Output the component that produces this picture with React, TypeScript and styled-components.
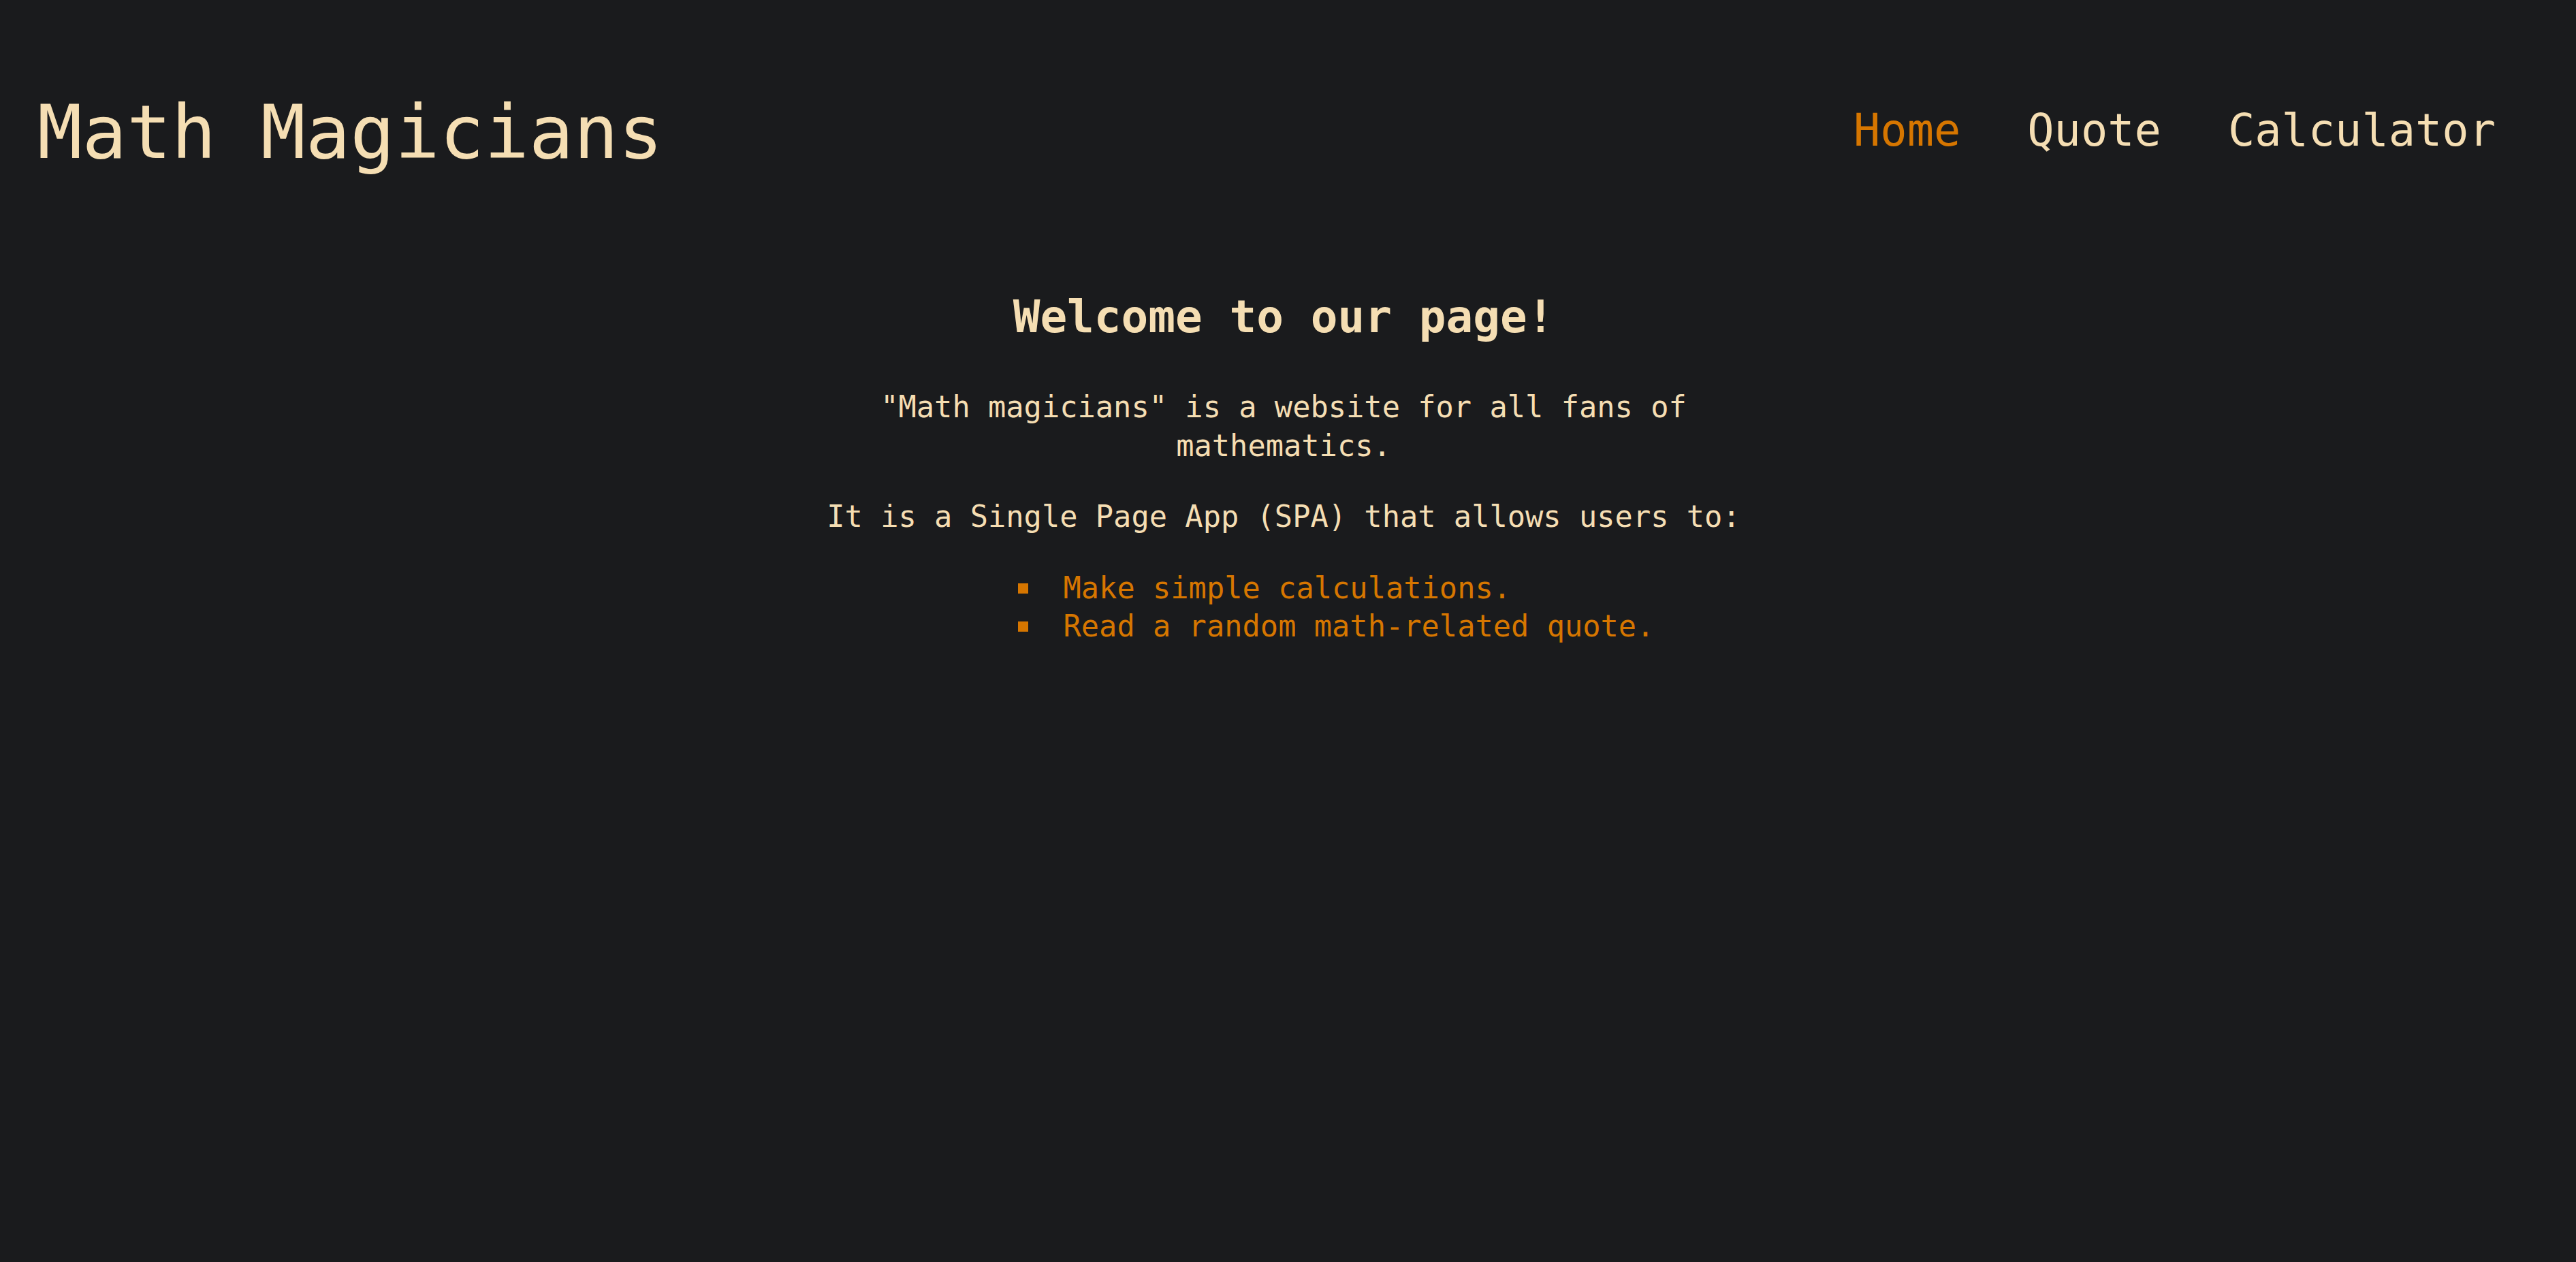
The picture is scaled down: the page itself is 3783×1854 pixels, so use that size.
import React from "react";
import styled, { createGlobalStyle } from "styled-components";

const GlobalStyle = createGlobalStyle`
  html, body {
    margin: 0;
    padding: 0;
    background: #1a1b1d;
  }
  body {
    min-height: 100vh;
    font-family: "DejaVu Sans Mono", "Liberation Mono", monospace;
    color: #f5deb3;
  }
`;

const Page = styled.div`
  min-height: 1854px;
  background: #1a1b1d;
  display: flex;
  flex-direction: column;
`;

const Header = styled.header`
  display: flex;
  align-items: center;
  justify-content: space-between;
  padding: 131px 118px 0 55px;
`;

const Logo = styled.h1`
  margin: 0;
  font-size: 109px;
  line-height: 127px;
  font-weight: normal;
  color: #f5deb3;
`;

const Nav = styled.nav`
  display: flex;
  gap: 98px;
  margin-bottom: 8px;
`;

const NavLink = styled.a<{ $active?: boolean }>`
  font-size: 65.3px;
  line-height: 76px;
  text-decoration: none;
  color: ${(p) => (p.$active ? "#d67600" : "#f5deb3")};
  cursor: pointer;
`;

const Main = styled.main`
  display: flex;
  flex-direction: column;
  align-items: center;
  padding-top: 169px;
  padding-right: 13px;
`;

const Content = styled.section`
  max-width: 1420px;
  text-align: center;
  display: flex;
  flex-direction: column;
  align-items: center;
`;

const Heading = styled.h2`
  margin: 0 0 65px;
  font-size: 66px;
  line-height: 77px;
  font-weight: bold;
  color: #f5deb3;
`;

const Paragraph = styled.p<{ $gap?: number }>`
  margin: 0 0 ${(p) => p.$gap ?? 47}px;
  font-size: 43.7px;
  line-height: 57px;
  color: #f5deb3;
`;

const List = styled.ul`
  list-style: none;
  margin: 0;
  padding: 0 0 0 154px;
  text-align: left;
  width: fit-content;
`;

const Item = styled.li`
  display: flex;
  align-items: center;
  font-size: 43.7px;
  line-height: 56px;
  color: #d67600;

  &::before {
    content: "";
    flex: none;
    width: 15px;
    height: 15px;
    margin-right: 52px;
    background: #d67600;
  }
`;

export default function App() {
  return (
    <>
      <GlobalStyle />
      <Page>
        <Header>
          <Logo>Math Magicians</Logo>
          <Nav>
            <NavLink $active>Home</NavLink>
            <NavLink>Quote</NavLink>
            <NavLink>Calculator</NavLink>
          </Nav>
        </Header>
        <Main>
          <Content>
            <Heading>Welcome to our page!</Heading>
            <Paragraph>
              "Math magicians" is a website for all fans of mathematics.
            </Paragraph>
            <Paragraph $gap={49}>
              It is a Single Page App (SPA) that allows users to:
            </Paragraph>
            <List>
              <Item>Make simple calculations.</Item>
              <Item>Read a random math-related quote.</Item>
            </List>
          </Content>
        </Main>
      </Page>
    </>
  );
}
